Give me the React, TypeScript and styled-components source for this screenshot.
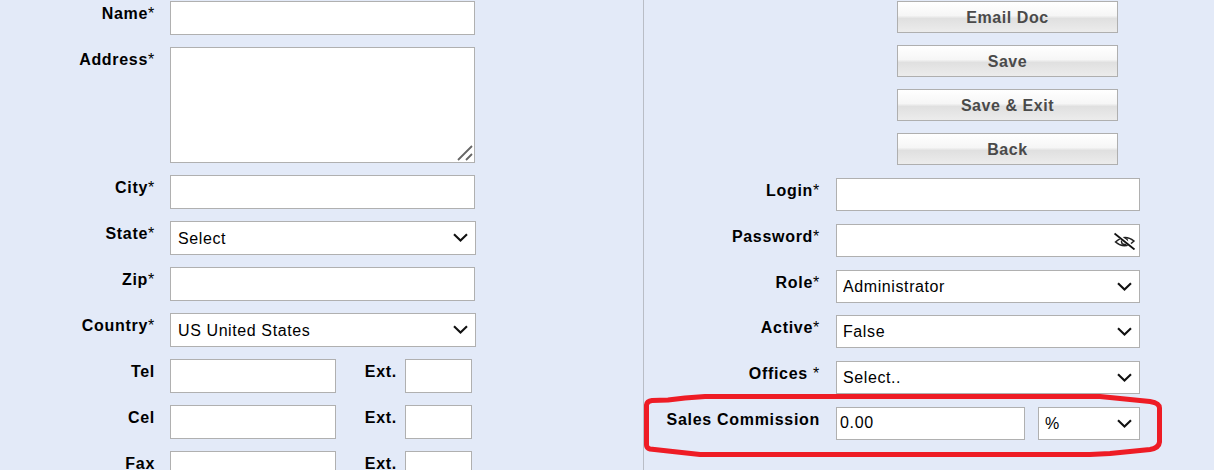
import React, { FC } from "react";
import styled, { createGlobalStyle } from "styled-components";

const GlobalStyle = createGlobalStyle`
  html, body {
    margin: 0;
    padding: 0;
    background: #e3eaf8;
    font-family: "Liberation Sans", Arial, sans-serif;
  }
`;

const Page = styled.div`
  position: relative;
  display: flex;
  width: 1214px;
  height: 470px;
  overflow: hidden;
  background: #e3eaf8;
`;

const LeftColumn = styled.div`
  display: flex;
  flex-direction: column;
  gap: 12px;
  width: 644px;
  height: 470px;
  padding-top: 1px;
  box-sizing: border-box;
  border-right: 1px solid #b9bdc6;
  flex-shrink: 0;
`;

const RightColumn = styled.div`
  display: flex;
  flex-direction: column;
  flex: 1;
  padding-top: 1px;
`;

const ButtonStack = styled.div`
  display: flex;
  flex-direction: column;
  gap: 12px;
  width: 221px;
  margin: 0 0 13px 253px;
`;

const GelButton = styled.button`
  height: 32px;
  box-sizing: border-box;
  padding: 2px 0 0;
  border: 1px solid #afafaf;
  border-radius: 0;
  background: linear-gradient(to bottom, #ffffff 0%, #f6f6f6 45%, #e0e0e0 55%, #ececec 100%);
  color: #4a4a4a;
  font: bold 16px "Liberation Sans", Arial, sans-serif;
  letter-spacing: 0.55px;
`;

const Row = styled.div<{ $labelWidth: number; $gap: number }>`
  display: grid;
  grid-template-columns: ${(p) => p.$labelWidth}px auto;
  column-gap: ${(p) => p.$gap}px;
  align-items: start;
`;

const RightFields = styled.div`
  display: flex;
  flex-direction: column;
  gap: 12.8px;
`;

const Label = styled.label`
  padding-top: 3px;
  text-align: right;
  color: #000;
  font-size: 16px;
  font-weight: bold;
  line-height: 20px;
  letter-spacing: 0.7px;
  white-space: nowrap;
`;

const Star = styled.span`
  font-weight: normal;
  color: #000;
`;

const TextInput = styled.input<{ $width: number; $height?: number }>`
  display: block;
  width: ${(p) => p.$width}px;
  height: ${(p) => p.$height ?? 34}px;
  box-sizing: border-box;
  padding: 0 3px;
  border: 1px solid #b0b0b0;
  background: #fff;
  color: #000;
  font: 16px "Liberation Sans", Arial, sans-serif;
  letter-spacing: 0.7px;
  outline: none;
`;

const AddressWrap = styled.div`
  position: relative;
  width: 305px;
  height: 116px;
`;

const AddressArea = styled.textarea`
  display: block;
  width: 100%;
  height: 100%;
  box-sizing: border-box;
  padding: 4px;
  margin: 0;
  border: 1px solid #b0b0b0;
  border-radius: 0;
  background: #fff;
  outline: none;
  resize: none;
`;

const ResizeGrip = styled.svg`
  position: absolute;
  right: 2px;
  bottom: 2px;
  width: 16px;
  height: 16px;
  pointer-events: none;
`;

const SelectWrap = styled.div<{ $width: number; $height: number }>`
  position: relative;
  width: ${(p) => p.$width}px;
  height: ${(p) => p.$height}px;
`;

const NativeSelect = styled.select<{ $pad: number }>`
  appearance: none;
  display: block;
  width: 100%;
  height: 100%;
  box-sizing: border-box;
  padding: 0 ${(p) => p.$pad}px;
  border: 1px solid #b0b0b0;
  border-radius: 0;
  background: #fff;
  color: #000;
  font: 16px "Liberation Sans", Arial, sans-serif;
  letter-spacing: 0.6px;
`;

const Chevron = styled.svg`
  position: absolute;
  top: 12px;
  right: 8px;
  width: 15px;
  height: 9px;
  pointer-events: none;
`;

const InlineFields = styled.div`
  display: flex;
  align-items: flex-start;
`;

const ExtLabel = styled(Label)`
  width: 61px;
  margin-right: 8px;
`;

const PasswordWrap = styled.div`
  position: relative;
  width: 304px;
`;

const EyeToggle = styled.svg`
  position: absolute;
  top: 8px;
  right: 4px;
  width: 22px;
  height: 18px;
`;

const CommissionFields = styled.div`
  display: flex;
  gap: 13px;
`;

const RedMark = styled.svg`
  position: absolute;
  left: 640px;
  top: 390px;
  width: 530px;
  height: 75px;
  pointer-events: none;
`;

const Arrow: FC = () => (
  <Chevron viewBox="0 0 15 9">
    <path d="M1 1.2 L7.5 7.5 L14 1.2" fill="none" stroke="#111" strokeWidth="2.1" />
  </Chevron>
);

const Select: FC<{ width: number; height?: number; pad?: number; value: string }> = ({
  width,
  height = 33,
  pad = 6,
  value,
}) => (
  <SelectWrap $width={width} $height={height}>
    <NativeSelect $pad={pad} defaultValue={value}>
      <option>{value}</option>
    </NativeSelect>
    <Arrow />
  </SelectWrap>
);

const Req: FC<{ text: string }> = ({ text }) => (
  <>
    {text}
    <Star>*</Star>
  </>
);

const ContactRow: FC<{ label: string }> = ({ label }) => (
  <Row $labelWidth={155} $gap={15}>
    <Label>{label}</Label>
    <InlineFields>
      <TextInput $width={166} />
      <ExtLabel>Ext.</ExtLabel>
      <TextInput $width={67} />
    </InlineFields>
  </Row>
);

const Eye: FC = () => (
  <EyeToggle viewBox="0 0 22 18">
    <path d="M1.5 10 Q10.5 1.5 20 9 Q11 18 1.5 10 Z" fill="none" stroke="#222" strokeWidth="1.5" />
    <circle cx="10.5" cy="9.5" r="3" fill="none" stroke="#222" strokeWidth="1.4" />
    <path d="M1 1 L21 17" stroke="#fff" strokeWidth="3.4" />
    <path d="M0.5 1.5 L20.5 17.5" stroke="#111" strokeWidth="1.8" />
  </EyeToggle>
);

export default function App() {
  return (
    <Page>
      <GlobalStyle />
      <LeftColumn>
        <Row $labelWidth={155} $gap={15}>
          <Label><Req text="Name" /></Label>
          <TextInput $width={305} />
        </Row>
        <Row $labelWidth={155} $gap={15}>
          <Label><Req text="Address" /></Label>
          <AddressWrap>
            <AddressArea />
            <ResizeGrip viewBox="0 0 16 16">
              <path d="M1 15 L15 1 M9 15 L15 9" stroke="#666" strokeWidth="1.8" fill="none" />
            </ResizeGrip>
          </AddressWrap>
        </Row>
        <Row $labelWidth={155} $gap={15}>
          <Label><Req text="City" /></Label>
          <TextInput $width={305} />
        </Row>
        <Row $labelWidth={155} $gap={15}>
          <Label><Req text="State" /></Label>
          <Select width={306} height={34} pad={7} value="Select" />
        </Row>
        <Row $labelWidth={155} $gap={15}>
          <Label><Req text="Zip" /></Label>
          <TextInput $width={305} />
        </Row>
        <Row $labelWidth={155} $gap={15}>
          <Label><Req text="Country" /></Label>
          <Select width={306} height={34} pad={7} value="US United States" />
        </Row>
        <ContactRow label="Tel" />
        <ContactRow label="Cel" />
        <ContactRow label="Fax" />
      </LeftColumn>
      <RightColumn>
        <ButtonStack>
          <GelButton>Email Doc</GelButton>
          <GelButton>Save</GelButton>
          <GelButton>Save &amp; Exit</GelButton>
          <GelButton>Back</GelButton>
        </ButtonStack>
        <RightFields>
          <Row $labelWidth={176} $gap={16}>
            <Label><Req text="Login" /></Label>
            <TextInput $width={304} $height={33} />
          </Row>
          <Row $labelWidth={176} $gap={16}>
            <Label><Req text="Password" /></Label>
            <PasswordWrap>
              <TextInput $width={304} $height={33} />
              <Eye />
            </PasswordWrap>
          </Row>
          <Row $labelWidth={176} $gap={16}>
            <Label><Req text="Role" /></Label>
            <Select width={304} value="Administrator" />
          </Row>
          <Row $labelWidth={176} $gap={16}>
            <Label><Req text="Active" /></Label>
            <Select width={304} value="False" />
          </Row>
          <Row $labelWidth={176} $gap={16}>
            <Label>Offices <Star>*</Star></Label>
            <Select width={304} value="Select.." />
          </Row>
          <Row $labelWidth={176} $gap={16}>
            <Label>Sales Commission</Label>
            <CommissionFields>
              <TextInput $width={189} $height={33} defaultValue="0.00" />
              <Select width={102} value="%" />
            </CommissionFields>
          </Row>
        </RightFields>
      </RightColumn>
      <RedMark viewBox="0 0 530 75">
        <path
          d="M6.5 55 L6.5 15 Q7 11 12 10.5 L28 10 L45 8 L65 6.5 L460 6.5 L490 9.5 L510 11.5 Q519.5 13 519.5 18 L519.5 52 Q519 58 510 59.5 L490 61.5 L470 63.5 L450 64.5 L60 64.5 L28 61 L10 59 Q6.5 58 6.5 55 Z"
          fill="none"
          stroke="#ee1c25"
          strokeWidth="5"
          strokeLinejoin="round"
        />
      </RedMark>
    </Page>
  );
}
